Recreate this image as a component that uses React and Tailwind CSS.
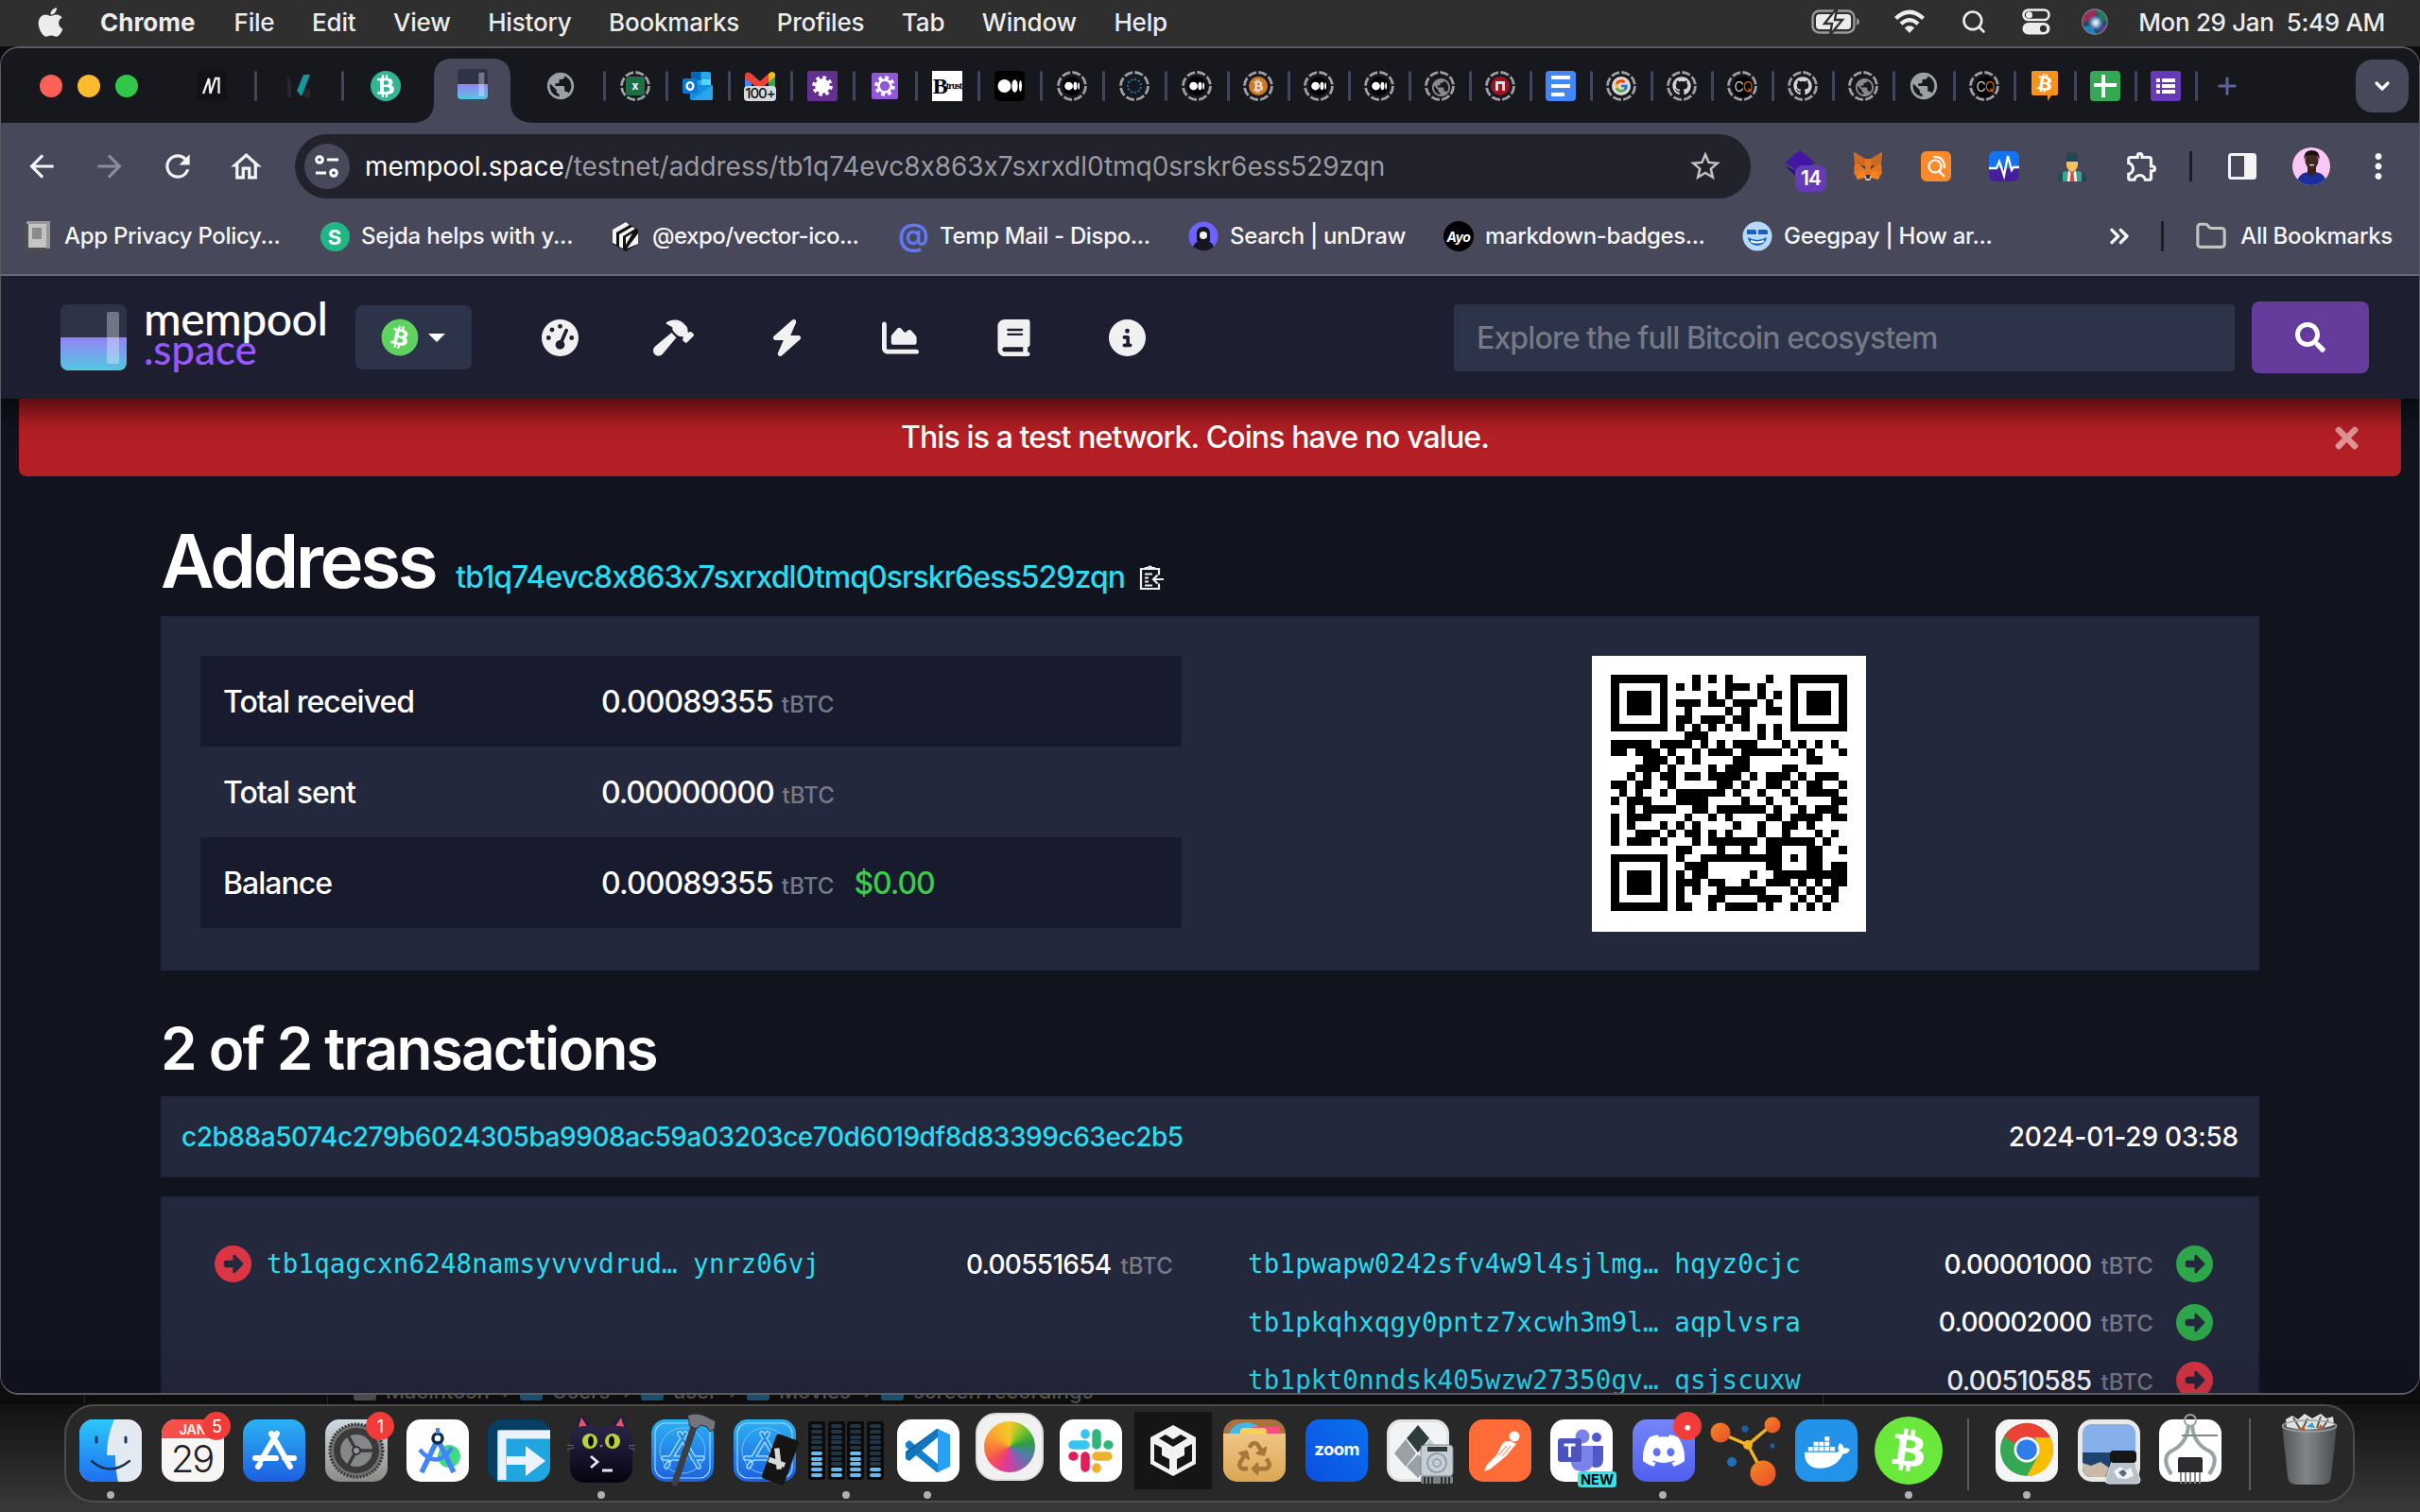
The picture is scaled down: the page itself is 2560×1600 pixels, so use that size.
import React from 'react';
import { FaApple, FaBitcoin, FaBtc, FaSearch, FaTimes, FaGithub, FaDocker, FaDiscord, FaRecycle } from 'react-icons/fa';
import { FaGaugeHigh, FaHammer, FaBolt, FaChartArea, FaBook, FaCircleInfo, FaCircleRight } from 'react-icons/fa6';
import { FcGoogle } from 'react-icons/fc';
import {
  MdPublic, MdArrowBack, MdArrowForward, MdRefresh, MdOutlineHome, MdStarBorder, MdOutlineExtension, MdMoreVert,
} from 'react-icons/md';
import { Search, Plus, ChevronDown, ChevronsRight, Folder } from 'lucide-react';

/* ---------- macOS menu bar ---------- */

const MENUS = ['File', 'Edit', 'View', 'History', 'Bookmarks', 'Profiles', 'Tab', 'Window', 'Help'];

function MenuBar() {
  return (
    <div className="flex h-[49px] shrink-0 items-center bg-[#2f2f2f] pb-[3px] text-[26px] font-medium tracking-[-0.2px] text-[#ececec]">
      <FaApple className="ml-[36px] size-[35px]" />
      <span className="ml-[35px] font-bold tracking-[0px]">Chrome</span>
      <div className="ml-[41px] flex gap-[39.6px]">
        {MENUS.map((m) => <span key={m}>{m}</span>)}
      </div>
      <div className="ml-auto flex items-center pr-[37px]">
        <svg viewBox="0 0 52 28" className="h-7 w-[52px]">
          <rect x="1.5" y="2.5" width="44" height="23" rx="7" fill="none" stroke="#9a9a9a" strokeWidth="2.4" />
          <rect x="5" y="6" width="37" height="16" rx="4" fill="#ececec" />
          <path d="M48 10v8q3-1.500 3-4t-3-4z" fill="#9a9a9a" />
          <path d="M26 1 14 16h8l-2 12 13-16h-8l2-11z" fill="#ececec" stroke="#2f2f2f" strokeWidth="2.4" />
        </svg>
        <svg viewBox="0 0 34 26" className="ml-[35px] h-[26px] w-[34px]">
          <path d="M2.500 9.500Q17-4 31.500 9.500M8 15.200Q17 7 26 15.200" fill="none" stroke="#ececec" strokeWidth="4.200" />
          <path d="M17 25 11.800 19.400Q17 15 22.200 19.400z" fill="#ececec" />
        </svg>
        <Search className="ml-[37px] size-[28px]" strokeWidth={2.3} />
        <svg viewBox="0 0 30 28" className="ml-[37px] h-7 w-[30px]">
          <rect x="1.500" y="1.500" width="27" height="10.500" rx="5.250" fill="none" stroke="#ececec" strokeWidth="2.600" />
          <circle cx="7.500" cy="6.750" r="3.500" fill="#ececec" />
          <rect x="0.500" y="15" width="29" height="12.500" rx="6.250" fill="#ececec" />
          <circle cx="22.500" cy="21.300" r="3.600" fill="#2f2f2f" />
        </svg>
        <svg viewBox="0 0 28 28" className="ml-[33px] size-7">
          <defs>
            <radialGradient id="siriCore"><stop offset="0" stopColor="#fff" /><stop offset=".35" stopColor="#c4dcff" stopOpacity=".85" /><stop offset="1" stopColor="#5a7fd0" stopOpacity="0" /></radialGradient>
            <clipPath id="siriClip"><circle cx="14" cy="14" r="13" /></clipPath>
          </defs>
          <g clipPath="url(#siriClip)">
            <rect width="28" height="28" fill="#1d4c63" />
            <path d="M0 0h18q-2 10-18 16z" fill="#9c2b56" />
            <path d="M14 0h14v14q-8 0-14-14z" fill="#1f7a5c" />
            <path d="M2 20q8-6 14 8H2z" fill="#1d7fc4" />
            <path d="M28 16q-8 0-10 12h10z" fill="#6d2f9b" />
          </g>
          <circle cx="15" cy="15" r="9" fill="url(#siriCore)" />
          <circle cx="14" cy="14" r="13.200" fill="none" stroke="#8a8189" strokeWidth="1.200" />
        </svg>
        <span className="ml-[32px] tracking-[-0.330px] whitespace-pre">Mon 29 Jan  5:49 AM</span>
      </div>
    </div>
  );
}

/* ---------- tab favicons ---------- */

function MempoolMark({ className }) {
  return (
    <svg viewBox="0 0 70 70" className={className}>
      <defs>
        <linearGradient id="poolFill" x1="0" y1="0" x2="0" y2="1">
          <stop offset="0" stopColor="#9482f5" />
          <stop offset="1" stopColor="#52c8e0" />
        </linearGradient>
        <clipPath id="poolClip"><rect width="70" height="70" rx="8" /></clipPath>
      </defs>
      <g clipPath="url(#poolClip)">
        <rect width="70" height="70" fill="#2e3348" />
        <rect y="35" width="70" height="35" fill="url(#poolFill)" />
        <rect x="49" y="8" width="13" height="55" rx="2" fill="#fff" opacity=".33" />
      </g>
    </svg>
  );
}

function Ring({ children }) {
  return (
    <div className="relative grid size-8 place-items-center">
      <svg viewBox="0 0 32 32" className="absolute inset-0">
        <circle cx="16" cy="16" r="14.500" fill="none" stroke="#9da0a5" strokeWidth="2.800" strokeDasharray="9 2.388" />
      </svg>
      <div className="grid size-5 place-items-center">{children}</div>
    </div>
  );
}

function MediumGlyph({ className }) {
  return (
    <svg viewBox="0 0 32 32" className={className}>
      <rect width="32" height="32" rx="5" fill="#000" />
      <circle cx="10.500" cy="16" r="7" fill="#fff" />
      <ellipse cx="21.500" cy="16" rx="3.200" ry="6.800" fill="#fff" />
      <ellipse cx="27.500" cy="16" rx="1.500" ry="6" fill="#fff" />
    </svg>
  );
}

const Globe = () => <MdPublic className="size-[34px] text-[#9aa0a6]" />;
const RingGlobe = () => <Ring><MdPublic className="size-[23px] text-[#85888d]" /></Ring>;
const RingMedium = () => <Ring><MediumGlyph className="size-5 rounded-full" /></Ring>;
const RingGithub = () => <Ring><FaGithub className="size-5 text-[#d4d4d4]" /></Ring>;
const RingCQ = () => (
  <Ring>
    <div className="flex size-[22px] items-center justify-center rounded-full bg-black text-[14px] leading-none tracking-[-1px] text-[#cfcfcf]">
      C<span className="text-[#c46a1c]">Q</span>
    </div>
  </Ring>
);

const Outlook = () => (
  <svg viewBox="0 0 32 32" className="size-8">
    <rect x="9" y="1" width="21" height="18" rx="2" fill="#28a8ea" />
    <rect x="9" y="1" width="10.500" height="9" fill="#0364b8" />
    <rect x="20" y="9" width="10" height="9" fill="#50d9ff" />
    <path d="M8 15h24v14a2 2 0 0 1-2 2H10a2 2 0 0 1-2-2z" fill="#1490df" />
    <path d="M32 15v14a2 2 0 0 1-2 2H10z" fill="#28a8ea" />
    <rect x="0" y="8" width="16" height="16" rx="2" fill="#0f78d4" />
    <ellipse cx="8" cy="16" rx="3.300" ry="3.900" fill="none" stroke="#fff" strokeWidth="2.400" />
  </svg>
);

const Gmail = () => (
  <div className="relative size-8">
    <svg viewBox="0 0 32 32" className="size-8">
      <path d="M0 3v21h7V11z" fill="#4285f4" />
      <path d="M32 3v21h-7V11z" fill="#34a853" />
      <path d="M32 3q-3-4-7 0v9l7-6z" fill="#fbbc04" />
      <path d="M0 5q1-6 7-2l9 8 9-8v9l-9 8L0 8z" fill="#ea4335" />
    </svg>
    <span className="absolute -left-px bottom-0 w-[34px] rounded bg-[#d8dadd] text-center text-[15px] leading-[16px] font-medium tracking-[-1px] text-[#111]">100+</span>
  </div>
);

const gear = (bg, outline) => (
  <svg viewBox="0 0 32 32" className="size-8">
    <rect x={outline ? 2 : 0} y={outline ? 2 : 0} width={outline ? 28 : 32} height={outline ? 28 : 32} rx="2" fill={bg} />
    <circle cx="16" cy="16" r="8.800" fill="none" stroke="#fff" strokeWidth="4" strokeDasharray="3.600 3.310" />
    <circle cx="16" cy="16" r="6.500" fill={outline ? 'none' : '#fff'} stroke="#fff" strokeWidth="2.600" />
  </svg>
);

const LEAD_TABS = [
  <div className="grid size-8 place-items-center bg-[#121216]">
    <svg viewBox="0 0 20 20" className="size-5"><path d="M1 18 7 2l1.500 16L14 2l3.500 0v16" fill="none" stroke="#f2f2f2" strokeWidth="2.300" /></svg>
  </div>,
  <svg viewBox="0 0 26 26" className="size-[26px]"><path d="M1 1v24h4V10l5 10zM19 16v9h6V16z" fill="#26282c" /><path d="M18 1h7L16 24l-5-6z" fill="#16969c" /></svg>,
  <div className="grid size-8 place-items-center rounded-full bg-[#33b596]"><FaBtc className="size-6 text-white" /></div>,
];

const MID_TABS = [
  <Ring><div className="grid size-5 place-items-center rounded-sm bg-[#1d7044] text-[12px] leading-none font-bold text-white">x</div></Ring>,
  <Outlook />,
  <Gmail />,
  gear('#63308f', false),
  gear('#9257d8', true),
  <div className="grid size-8 place-items-center bg-white font-['Liberation_Serif'] font-bold text-black">
    <div className="flex items-center leading-[26px] whitespace-nowrap"><span className="text-[24px] tracking-[-2px]">B</span><span className="text-[10px] tracking-[-0.8px]">trust</span></div>
  </div>,
  <MediumGlyph className="size-8" />,
  <RingMedium />,
  <Ring><div className="size-4 rounded-full border-2 border-dotted border-[#27779b]" /></Ring>,
  <RingMedium />,
];

const END_TABS = [
  <Ring><div className="grid size-5 place-items-center rounded-full bg-[#cd7a26]"><FaBtc className="size-3.5 text-[#ddd]" /></div></Ring>,
  <RingMedium />,
  <RingMedium />,
  <RingGlobe />,
  <Ring><div className="grid size-5 place-items-center rounded-full bg-[#a01220]"><div className="size-2.5 border-x-[3px] border-t-[3px] border-[#ddd]" /></div></Ring>,
  <div className="flex size-8 flex-col justify-center gap-[5px] rounded bg-[#4486f4] pl-[6px]">
    <div className="h-1 w-5 bg-white" /><div className="h-1 w-5 bg-white" /><div className="h-1 w-3.5 bg-white" />
  </div>,
  <Ring><div className="grid size-5 place-items-center rounded-full bg-[#dadada]"><FcGoogle className="size-4" /></div></Ring>,
  <RingGithub />,
  <RingCQ />,
  <RingGithub />,
  <RingGlobe />,
  <Globe />,
  <RingCQ />,
  <svg viewBox="0 0 28 32" className="h-8 w-7"><path d="M2 0h24a2 2 0 0 1 2 2v22a2 2 0 0 1-2 2h-5l-4 6v-6H2a2 2 0 0 1-2-2V2a2 2 0 0 1 2-2z" fill="#f7931a" /><g transform="translate(4 3) rotate(10 10 10)"><FaBtc size={20} color="#fff" /></g></svg>,
  <svg viewBox="0 0 32 32" className="size-8"><rect width="32" height="32" rx="4" fill="#34a853" /><path d="M12 4h4v9h12v4H16v11h-4V17H4v-4h8z" fill="#fff" /></svg>,
  <svg viewBox="0 0 32 32" className="size-8"><rect width="32" height="32" rx="3" fill="#673ab7" /><path d="M6 8h4v4H6zM12 8h14v4H12zM6 14h4v4H6zM12 14h14v4H12zM6 20h4v4H6zM12 20h14v4H12z" fill="#fff" /></svg>,
];

const Sep = () => <div className="-mx-[1.500px] h-8 w-[3px] shrink-0 rounded bg-[#43465b]" />;

function TabStrip() {
  return (
    <div className="flex h-[79px] shrink-0 items-center bg-[#17181d]">
      <div className="ml-[41px] flex w-[136px] shrink-0 gap-4">
        <div className="size-6 rounded-full bg-[#fe5f57]" />
        <div className="size-6 rounded-full bg-[#febb2e]" />
        <div className="size-6 rounded-full bg-[#32c749]" />
      </div>
      {LEAD_TABS.map((t, i) => (
        <React.Fragment key={i}>
          <div className="grid w-[92px] shrink-0 place-items-center">{t}</div>
          {i < 2 && <Sep />}
        </React.Fragment>
      ))}
      <div className="relative -ml-[17px] flex h-[68px] w-[127px] shrink-0 items-center justify-center self-end">
        <svg viewBox="0 0 127 68" className="absolute inset-0">
          <path d="M0 68q22-1 22-22V20Q22 0 42 0h41q20 0 20 20v26q0 21 24 22z" fill="#47495b" />
        </svg>
        <MempoolMark className="relative mr-[2px] mb-[14px] size-8" />
      </div>
      <div className="-ml-[17px] grid w-[92px] shrink-0 place-items-center"><Globe /></div>
      {MID_TABS.map((t, i) => (
        <React.Fragment key={i}>
          <Sep />
          <div className="grid w-[66px] shrink-0 place-items-center">{t}</div>
        </React.Fragment>
      ))}
      {END_TABS.map((t, i) => (
        <React.Fragment key={i}>
          <Sep />
          <div className="grid w-[64px] shrink-0 place-items-center">{t}</div>
        </React.Fragment>
      ))}
      <Sep />
      <Plus className="ml-[19px] size-7 text-[#5a6596]" strokeWidth={2.600} />
      <div className="mr-[11px] ml-auto grid h-14 w-[56px] shrink-0 place-items-center rounded-[18px] bg-[#47495b]">
        <ChevronDown className="size-6 text-white" strokeWidth={3.200} />
      </div>
    </div>
  );
}

/* ---------- toolbar & bookmarks ---------- */

const Fox = () => (
  <svg viewBox="0 0 32 32" className="size-8">
    <path d="M1 1 13 8h6L31 1l-1 13 1 9-4 7-7-2-2 3h-4l-2-3-7 2-4-7 1-9z" fill="#e27625" />
    <path d="M1 1 13 8l-1 9-9-4zM31 1 19 8l1 9 9-4z" fill="#cb6b22" />
    <path d="M5 22l7-1 2 7-2 0-7 2zM27 22l-7-1-2 7 2 0 7 2z" fill="#f5841f" />
    <path d="M8 15l5 1 0 3zM24 15l-5 1 0 3z" fill="#2f343b" />
    <path d="M12 26h8l-2 5h-4z" fill="#d5bfb2" /><path d="M13.500 25h5l-1 4h-3z" fill="#233447" />
  </svg>
);

function Toolbar() {
  return (
    <div className="flex h-[92px] shrink-0 items-center bg-[#47495b] text-[#f4f4f4]">
      <div className="ml-[7px] flex shrink-0">
        <div className="grid w-[72px] place-items-center"><MdArrowBack className="size-[38px]" /></div>
        <div className="grid w-[72px] place-items-center"><MdArrowForward className="size-[38px] text-[#8b8c97]" /></div>
        <div className="grid w-[72px] place-items-center"><MdRefresh className="size-[38px]" /></div>
        <div className="grid w-[72px] place-items-center"><MdOutlineHome className="size-[39px]" /></div>
      </div>
      <div className="ml-[16px] flex h-[68px] w-[1540px] shrink-0 items-center rounded-full bg-[#21222b] pr-[29px] pl-[10px]">
        <div className="grid size-12 place-items-center rounded-full bg-[#47495b]">
          <svg viewBox="0 0 26 24" className="h-6 w-[26px]" fill="none" stroke="#fff" strokeWidth="3">
            <circle cx="5" cy="5" r="3.300" /><path d="M13 5h12M1 19h11" /><circle cx="20" cy="19" r="3.300" />
          </svg>
        </div>
        <span className="ml-[16px] text-[28px] tracking-[-0.040px] text-[#9a9ba1]">
          <span className="text-white">mempool.space</span>/testnet/address/tb1q74evc8x863x7sxrxdl0tmq0srskr6ess529zqn
        </span>
        <MdStarBorder className="ml-auto size-[38px] text-[#c3c3c0]" />
      </div>
      <div className="ml-[16px] flex shrink-0 items-center">
        <div className="relative grid w-[72px] place-items-center">
          <svg viewBox="0 0 36 36" className="size-9"><path d="M18 1 34 14 18 24 2 14z" fill="#4215a5" /><path d="M2 17l16 16 8-8-8 0z" fill="#2c0e86" /></svg>
          <span className="absolute top-[17px] left-[31px] rounded-[8px] bg-[#653cb8] px-[6px] text-[21px] leading-[28px] font-semibold tracking-[-1px] text-white">14</span>
        </div>
        <div className="grid w-[72px] place-items-center"><Fox /></div>
        <div className="grid w-[72px] place-items-center">
          <svg viewBox="0 0 32 32" className="size-8"><rect width="32" height="32" rx="6" fill="#fb8a2c" /><circle cx="15" cy="16" r="6.500" fill="none" stroke="#fff" strokeWidth="2.200" /><path d="M19 21l6 6M13 6q12-1 12 12" fill="none" stroke="#fff" strokeWidth="2.200" /></svg>
        </div>
        <div className="grid w-[72px] place-items-center">
          <svg viewBox="0 0 32 32" className="size-8"><rect width="32" height="32" rx="6" fill="#1373f0" /><path d="M0 18h32v8a6 6 0 0 1-6 6H6a6 6 0 0 1-6-6z" fill="#43209a" /><path d="M0 18h8l3-7 5 15 4-21 4 15 2-3h6" fill="none" stroke="#fff" strokeWidth="2.300" /></svg>
        </div>
        <div className="grid w-[72px] place-items-center">
          <svg viewBox="0 0 32 32" className="size-8"><path d="M10 10V3q6-5 12 0v7l2 1q-8 4-16 0z" fill="#264653" /><path d="M10 11h12v5q-2 5-6 6-4-1-6-6z" fill="#f4c15d" /><path d="M0 32q0-9 9-11l7 3 7-3q9 2 9 11z" fill="#3ba58d" /><path d="M0 32q0-9 6-10v10zM32 32q0-9-6-10v10z" fill="#264653" /><path d="M12 20l4 4 4-4 1 12H11z" fill="#fff" /><path d="M14.500 22h3l1 10h-5z" fill="#e2483a" /></svg>
        </div>
        <div className="grid w-[72px] place-items-center pl-1"><MdOutlineExtension className="size-[38px]" /></div>
      </div>
      <div className="ml-[16px] h-8 w-[3px] bg-[#1c1d25]" />
      <svg viewBox="0 0 30 28" className="ml-[38px] h-7 w-[30px]"><rect x="1.500" y="1.500" width="27" height="25" rx="2" fill="none" stroke="#f4f4f4" strokeWidth="3" /><path d="M17 1h10v26H17z" fill="#f4f4f4" /></svg>
      <svg viewBox="0 0 40 40" className="ml-[38px] size-10">
        <defs><clipPath id="face"><circle cx="20" cy="20" r="20" /></clipPath></defs>
        <g clipPath="url(#face)"><rect width="40" height="40" fill="#fbc8f5" /><path d="M4 42q0-14 12-16h9q12 2 12 16z" fill="#1a2f9e" /><path d="M16 20h9v7l-4 4-5-4z" fill="#3a221b" /><ellipse cx="20.500" cy="14" rx="7" ry="9" fill="#43281f" /><path d="M12.500 13q-1-10 8-10t8 10l-2-4q-6-2-12 0z" fill="#181112" /><path d="M17.500 18q3 3 6 0z" fill="#eee" /></g>
      </svg>
      <MdMoreVert className="mr-[22px] ml-auto size-[42px]" />
    </div>
  );
}

const BOOKMARKS = [
  ['App Privacy Policy...', <svg viewBox="0 0 28 32" className="mr-[3px] h-8 w-7"><rect x="3" width="25" height="29" fill="#9a9a9a" /><rect x="0" y="3" width="24" height="29" fill="#4d4d4d" /><rect x="5" y="3" width="19" height="25" fill="#c4c4c4" /><path d="M9 7h10v12H9z" fill="#8b8b8b" /></svg>],
  ['Sejda helps with y...', <div className="grid size-[31px] place-items-center rounded-full bg-[#1fb884] text-[22px] font-bold tracking-normal text-white">S</div>],
  ['@expo/vector-ico...', <svg viewBox="0 0 32 32" className="size-8"><path d="M2 9 16 1l13 8v15l-13 8-14-8z" fill="#111" /><path d="M2 9 16 1l4 3L6 12v13l-4-2zM9 14l14-8 3 2-13 8v13l-4-2z" fill="#f4f4f4" /><path d="M17 29 29 13v11zM16 25V17l7-4z" fill="#f4f4f4" /></svg>],
  ['Temp Mail - Dispo...', <span className="mb-1 text-[33px] leading-8 font-semibold tracking-normal text-[#6577f3]">@</span>],
  ['Search | unDraw', <svg viewBox="0 0 32 32" className="size-8"><circle cx="16" cy="16" r="15.500" fill="#6c63ff" /><path d="M9 16q-1-10 7-10t7 10v5H9z" fill="#17151f" /><circle cx="16" cy="15" r="4" fill="#f2f2f2" /><path d="M5 27q3-7 11-7t11 7q-11 9-22 0z" fill="#17151f" /></svg>],
  ['markdown-badges...', <div className="grid size-8 place-items-center rounded-full bg-black text-[14px] font-bold tracking-[-0.500px] text-white italic">Ayo</div>],
  ['Geegpay | How ar...', <svg viewBox="0 0 32 32" className="size-8"><circle cx="16" cy="16" r="15.500" fill="#b9d9fb" /><path d="M5 14v-5h8a2 2 0 0 1 2 2v3zM17 14v-5h8a2 2 0 0 1 2 2v3z" fill="#1464c8" /><path d="M6 17q10 6 20 0-1 8-10 9-9-1-10-9z" fill="#1464c8" /><path d="M9 21q7 3 14 0" stroke="#fff" strokeWidth="2" fill="none" /></svg>],
];
const BOOKMARK_STYLES = [
  'w-[314px] tracking-[-0.300px]', 'w-[308px] tracking-[-0.220px]', 'w-[304px] tracking-[-0.520px]', 'w-[307px] tracking-[-0.340px]',
  'w-[270px] tracking-[-0.300px]', 'w-[316px] tracking-[-0.370px]', 'w-[300px] tracking-[-0.270px]',
];

function BookmarksBar() {
  return (
    <div className="flex h-[70px] shrink-0 items-start border-b-2 border-[#6a6b76] bg-[#47495b]">
      <div className="flex h-14 w-full items-center text-[24px] font-medium text-[#f6f6f6]">
        <div className="w-[23px] shrink-0" />
        {BOOKMARKS.map(([name, icon], i) => (
          <div key={name} className={`flex shrink-0 items-center whitespace-nowrap ${BOOKMARK_STYLES[i]}`}>
            <div className="mr-3 grid w-8 shrink-0 place-items-center">{icon}</div>
            {name}
          </div>
        ))}
        <ChevronsRight className="ml-[83px] size-[32px] shrink-0" strokeWidth={2.500} />
        <div className="ml-[28px] h-8 w-[3px] shrink-0 bg-[#1c1d25]" />
        <Folder className="mr-[14px] ml-auto size-[34px] shrink-0 text-[#c3c3c0]" strokeWidth={2.200} />
        <span className="mr-[28px] tracking-[-0.300px] whitespace-nowrap">All Bookmarks</span>
      </div>
    </div>
  );
}

/* ---------- mempool page ---------- */

const NAV = [FaGaugeHigh, FaHammer, FaBolt, FaChartArea, FaBook, FaCircleInfo];

function SiteHeader() {
  return (
    <header className="relative z-10 flex h-[130px] shrink-0 items-center bg-[#1d1f31] shadow-[0_6px_24px_8px_rgba(0,0,0,0.550)]">
      <MempoolMark className="ml-[63px] size-[70px] shrink-0" />
      <div className="ml-[18px] w-[224px] shrink-0 pb-[8px] font-['Lato'] leading-[32px]">
        <div className="text-[48px] tracking-[-0.500px] text-white">mempool</div>
        <div className="text-[44px] tracking-[-0.100px] text-[#9857ff]">.space</div>
      </div>
      <div className="flex h-[68px] w-[123px] shrink-0 items-center gap-[10px] rounded-lg bg-[#2d3348] pl-[27px]">
        <div className="grid size-[40px] place-items-center rounded-full bg-[radial-gradient(circle,#fff_55%,transparent_56%)]"><FaBitcoin className="size-[40px] text-[#5fd35f]" /></div>
        <div className="size-0 border-x-[9px] border-t-[9px] border-x-transparent border-t-white" />
      </div>
      <nav className="ml-[33px] flex shrink-0">
        {NAV.map((Icon, i) => (
          <div key={i} className="grid w-[120px] place-items-center"><Icon className={i === 1 ? 'size-[43px] text-[#f1f1f1]' : 'size-[39px] text-[#f1f1f1]'} /></div>
        ))}
      </nav>
      <div className="ml-auto flex h-[71px] w-[826px] shrink-0 items-center rounded bg-[#2d3348] pt-[2px] pl-6 text-[32px] tracking-[-0.880px] text-[#747a85]">
        Explore the full Bitcoin ecosystem
      </div>
      <div className="mr-[53px] ml-[18px] grid h-[76px] w-[124px] shrink-0 place-items-center rounded-lg bg-[#653b9c]"><FaSearch className="size-[32px] text-white" /></div>
    </header>
  );
}

const Unit = () => <span className="text-[24px] tracking-[0.100px] text-[#777a86]">tBTC</span>;

const QR_ROWS = [
  '0-6,10,12,14,19,22-28', '0,6,8,10,14-16,18,22,28', '0,2-4,6,12,14,18,20,22,24-26,28',
  '0,2-4,6,8-10,12-13,15-17,19,22,24-26,28', '0,2-4,6,9,14,16,19-20,22,24-26,28', '0,6,8-9,11-13,15-16,22,28',
  '0-6,8,10,12,14,16,18,20,22-28', '9-11,18,20', '0-4,6-9,11,13,15-17,21,23,25,27', '0-1,3-5,7,10,12-14,16-20,22,24,28',
  '4-6,8,10,15-16,24-25', '3-5,7,12,14-16,21-22', '2,4,6-7,9-10,12-15,17,19-21,23,25-27', '0-1,3-4,7,13-14,16,19-20,22,24-25,28',
  '1,3,6,8-13,15,18,21,24-27', '0,2-4,8-11,16,19,22,27-28', '2,4-7,10-11,13-18,20,23,25-27', '0,2-4,9,12,14,19-20,22-25,27-28',
  '0,2,6,8,10,15,18,21-22,24', '0,3-5,7,9-10,12,14,18,21,25,27', '0,2-4,6,10,12-17,19-24,26', '8-9,13,16,19-20,24-25,28',
  '0-6,8,11-20,22,24-25', '0,6,9-11,19-20,24-25,27-28', '0,2-4,6,8,10-11,17,20-28', '0,2-4,6,8-10,12-13,16,19-21,23,25,27-28',
  '0,2-4,6,8,10,13-18,22,24,26-27', '0,6,8,12-13,18-20,23,25,27', '0-6,8-9,12,14-17,19,22,24,26',
];
const QR_PATH = QR_ROWS.map((row, y) => row.split(',').map((run) => {
  const [a, b = a] = run.split('-').map(Number);
  return `M${a} ${y}h${b - a + 1}v1h-${b - a + 1}z`;
}).join('')).join('');

const BALANCE = [['Total received', '0.00089355'], ['Total sent', '0.00000000'], ['Balance', '0.00089355', '$0.00']];

function AddressCard() {
  return (
    <section className="flex h-[375px] border-2 border-[#202539] bg-[#24283c] pt-10 pl-10">
      <div className="w-[1038px] shrink-0 text-[32px]">
        {BALANCE.map(([label, amount, fiat], i) => (
          <div key={label} className={`flex h-24 items-center pt-[2px] pl-6 text-white ${i === 1 ? '' : 'bg-[#181b2d]'}`}>
            <div className="w-[400px] tracking-[-0.980px]">{label}</div>
            <div className="flex items-baseline gap-[9px]">
              <span className={i === 1 ? 'tracking-[-1.150px]' : 'tracking-[-0.870px]'}>{amount}</span><Unit />
              {fiat && <span className="ml-[12px] tracking-[-1.100px] text-[#3bcc49]">{fiat}</span>}
            </div>
          </div>
        ))}
      </div>
      <div className="ml-[434px] h-[292px] w-[290px] bg-white p-5">
        <svg viewBox="0 0 29 29" className="size-[250px]" shapeRendering="crispEdges"><path d={QR_PATH} fill="#000" /></svg>
      </div>
    </section>
  );
}

const OUTPUTS = [
  ['tb1pwapw0242sfv4w9l4sjlmg… hqyz0cjc', '0.00001000', false],
  ['tb1pkqhxqgy0pntz7xcwh3m9l… aqplvsra', '0.00002000', false],
  ['tb1pkt0nndsk405wzw27350gv… qsjscuxw', '0.00510585', true],
];
const Amount = ({ value }) => (
  <span className="ml-auto flex items-baseline gap-[10px] text-[28px] text-white"><span className="tracking-[-0.720px]">{value}</span><Unit /></span>
);
const Mono = ({ children }) => (
  <span className="font-['DejaVu_Sans_Mono'] text-[27.500px] tracking-[0.160px] whitespace-pre text-[#2bdcf0]">{children}</span>
);

function Page() {
  return (
    <div className="flex min-h-0 flex-1 flex-col overflow-hidden bg-[#11131f] font-[450]">
      <SiteHeader />
      <div className="mx-[19px] flex h-[82px] shrink-0 items-center rounded-b-lg bg-[#b31f24] text-[32px] tracking-[-0.890px] text-white">
        <span className="ml-[933px]">This is a test network. Coins have no value.</span>
        <FaTimes className="mr-[40px] ml-auto size-[35px] text-[#dc9497]" />
      </div>
      <main className="mx-[169px] shrink-0">
        <div className="flex h-[148px] items-baseline pt-[45px]">
          <h1 className="text-[78px] leading-[90px] font-[560] tracking-[-3.400px] text-white">Address</h1>
          <span className="ml-[22px] text-[32px] tracking-[-0.960px] text-[#2bdcf0]">tb1q74evc8x863x7sxrxdl0tmq0srskr6ess529zqn</span>
          <svg viewBox="0 0 26 28" className="ml-[15px] h-7 w-[26px] translate-y-[3px]" fill="none" stroke="#eee" strokeWidth="2.200">
            <path d="M21 11.500V5H2v21h19v-5.500M7 5.500V4h2.500a2.200 2.200 0 0 1 4 0H16v1.500M6 10.500h8M6 14.500h4M6 18.500h4M6 22.500h8M26 16H14.500m5-4.500L15 16l4.500 4.500" />
          </svg>
        </div>
        <AddressCard />
        <h2 className="h-[133px] pt-[45px] text-[62px] leading-[76px] font-[560] tracking-[-1.800px] text-white">2 of 2 transactions</h2>
        <div className="flex h-[86px] items-center justify-between border-2 border-[#202539] bg-[#24283c] pr-[20px] pl-[20px] text-[28px]">
          <span className="tracking-[-0.450px] text-[#2bdcf0]">c2b88a5074c279b6024305ba9908ac59a03203ce70d6019df8d83399c63ec2b5</span>
          <span className="tracking-[-0.220px] text-white">2024-01-29 03:58</span>
        </div>
        <div className="mt-5 flex h-[260px] gap-[79px] border-2 border-[#202539] bg-[#24283c] pt-[39px] pr-[47px] pl-[55px]">
          <div className="w-[1014px] shrink-0">
            <div className="flex h-[61.500px] items-center">
              <FaCircleRight className="mr-[16px] size-[39px] text-[#dc3546]" />
              <Mono>tb1qagcxn6248namsyvvvdrud… ynrz06vj</Mono>
              <Amount value="0.00551654" />
            </div>
          </div>
          <div className="flex-1">
            {OUTPUTS.map(([addr, value, spent]) => (
              <div key={addr} className="flex h-[61.500px] items-center">
                <Mono>{addr}</Mono>
                <Amount value={value} />
                <FaCircleRight className={`ml-[24px] size-[39px] ${spent ? 'text-[#dc3546]' : 'text-[#2ea64a]'}`} />
              </div>
            ))}
          </div>
        </div>
      </main>
    </div>
  );
}

/* ---------- dock ---------- */

const Tile = ({ fill, children }) => (
  <svg viewBox="0 0 66 66" className="size-[66px] shrink-0 overflow-visible">
    {fill && <rect width="66" height="66" rx="15" fill={fill} />}
    {children}
  </svg>
);

const Defs = () => (
  <svg className="absolute size-0">
    <defs>
      <linearGradient id="blueTile" x1="0" y1="0" x2="0" y2="1"><stop offset="0" stopColor="#2bb2f3" /><stop offset="1" stopColor="#1d5fe0" /></linearGradient>
      <linearGradient id="finderL" x1="0" y1="0" x2="0" y2="1"><stop offset="0" stopColor="#2bc7fb" /><stop offset="1" stopColor="#1e6ff0" /></linearGradient>
      <linearGradient id="silver" x1="0" y1="0" x2="0" y2="1"><stop offset="0" stopColor="#cfdbe2" /><stop offset="1" stopColor="#8d8a86" /></linearGradient>
      <linearGradient id="catBody" x1="0" y1="0" x2="0" y2="1"><stop offset="0" stopColor="#2a2548" /><stop offset="1" stopColor="#05040f" /></linearGradient>
      <linearGradient id="kraft" x1="0" y1="0" x2="0" y2="1"><stop offset="0" stopColor="#efc583" /><stop offset="1" stopColor="#dba756" /></linearGradient>
      <linearGradient id="zoomBg" x1="1" y1="0" x2="0" y2="1"><stop offset="0" stopColor="#0a72ee" /><stop offset="1" stopColor="#0b4fe0" /></linearGradient>
      <linearGradient id="discordBg" x1="0" y1="0" x2="0" y2="1"><stop offset="0" stopColor="#7585f7" /><stop offset="1" stopColor="#4f5ff0" /></linearGradient>
      <linearGradient id="nodeFill" x1="0" y1="0" x2="1" y2="1"><stop offset="0" stopColor="#f28a22" /><stop offset="1" stopColor="#ea4a2c" /></linearGradient>
      <linearGradient id="binFill" x1="0" y1="0" x2="1" y2="0"><stop offset="0" stopColor="#565a5c" /><stop offset=".45" stopColor="#8c9193" /><stop offset="1" stopColor="#4b4f51" /></linearGradient>
      <clipPath id="tileClip"><rect width="66" height="66" rx="15" /></clipPath>
    </defs>
  </svg>
);

const AFrame = ({ stroke = '#fff', width = 6 }) => (
  <g stroke={stroke} strokeWidth={width} strokeLinecap="round" fill="none">
    <path d="M36 15 20 42M30 15l20 35M13 41h22M44 41h10M18 47l-2 3" />
  </g>
);
const XcodeBase = () => (
  <>
    <rect x="4" y="4" width="58" height="58" rx="11" fill="none" stroke="#9fd6fb" strokeWidth="1.200" />
    <circle cx="33" cy="33" r="24" fill="none" stroke="#7cc3f7" strokeWidth="1" />
    <AFrame stroke="#b5e0fd" width={5.500} />
    <AFrame stroke="#2290ee" width={3} />
  </>
);

const METER_LEVELS = [5, 2, 5, 2];
const PINWHEEL = 'size-[54px] rounded-full bg-[conic-gradient(#f3c928,#7cc42a_40deg,#2f9e3f_75deg,#4d7fa8_115deg,#8f5bb0_150deg,#e0399a_190deg,#f4485f_225deg,#f8793a_265deg,#f9b02c_315deg,#f3c928)]';

const DOCK = [
  { dot: true, icon: <Tile fill="#e4eaf2"><g clipPath="url(#tileClip)"><path d="M0 0h37q-8 18-8 38h9q0 16 3 28H0z" fill="url(#finderL)" /></g><path d="M18 19v5M49 19v5" stroke="#16385f" strokeWidth="3" strokeLinecap="round" /><path d="M13 44q19 17 40 0" fill="none" stroke="#17324f" strokeWidth="2.400" strokeLinecap="round" /></Tile> },
  { badge: '5', icon: <Tile fill="#f7f6f4"><path d="M0 20v-5A15 15 0 0 1 15 0h36a15 15 0 0 1 15 15v5z" fill="#f5504a" /><text x="33" y="16" fontSize="14" fontWeight="600" fill="#fff" textAnchor="middle">JAN</text><text x="32" y="56" fontSize="40" fontWeight="300" letterSpacing="-2" fill="#222" textAnchor="middle">29</text></Tile> },
  { icon: <Tile fill="url(#blueTile)"><AFrame /></Tile> },
  { badge: '1', icon: <Tile fill="url(#silver)"><circle cx="33" cy="33" r="28" fill="#6f7274" stroke="#333" strokeWidth="3" strokeDasharray="2 1.500" /><circle cx="33" cy="33" r="20.500" fill="#85888a" stroke="#3a3a3a" strokeWidth="7" /><path d="M33 33 23 15M33 33h21M33 33 23 51" stroke="#3a3a3a" strokeWidth="3.500" /><circle cx="33" cy="33" r="4" fill="#999" stroke="#333" strokeWidth="2" /></Tile> },
  { icon: <Tile fill="#fff"><circle cx="45" cy="39" r="12" fill="#3ddc84" /><path d="M33 21 16 56M33 21l17 35" stroke="#4285f4" strokeWidth="5.500" /><path d="M14 32q18 22 34-2" fill="none" stroke="#4285f4" strokeWidth="4.500" /><circle cx="33" cy="20" r="5" fill="#fff" stroke="#073042" strokeWidth="3.500" /><path d="M33 15v-6" stroke="#4285f4" strokeWidth="4" /></Tile> },
  { icon: <Tile fill="#073e63"><path d="M10 16a5 5 0 0 1 5-5h51v40a15 15 0 0 1-15 15H10z" fill="#1fa5e0" /><path d="M15 64V16h51" fill="none" stroke="#eaf3ff" strokeWidth="9" /><path d="M20 39h20V28l21 16-21 16V48H20z" fill="#eaf3ff" /></Tile> },
  { dot: true, icon: <Tile><path d="M5 20 9-4Q15-6 23 9h20Q51-6 57-4l4 24z" fill="#241d40" /><path d="M9 8 12-2l7 11zM57 8 54-2l-7 11z" fill="#e4566b" /><rect y="7" width="66" height="60" rx="15" fill="url(#catBody)" /><circle cx="21" cy="23" r="8" fill="#b6d43a" /><circle cx="45" cy="23" r="8" fill="#b6d43a" /><ellipse cx="22" cy="23" rx="3" ry="5.500" fill="#0d0b18" /><ellipse cx="44" cy="23" rx="3" ry="5.500" fill="#0d0b18" /><path d="M31 27h4l-2 3z" fill="#e4566b" /><path d="M22 39l7 6-7 6M34 54h11" fill="none" stroke="#e8e4f5" strokeWidth="2.800" /><path d="M-3 27l7 1M-3 32l7-2M69 27l-7 1M69 32l-7-2" stroke="#6d6781" /></Tile> },
  { icon: <Tile fill="url(#blueTile)"><XcodeBase /><path d="M45 8 25 67" stroke="#3b3f47" strokeWidth="7" strokeLinecap="round" /><path d="M38-4q10-5 22 2l8 4-1 8-5 3-3-5-6-2-6 4-7-4q1-4-2-10z" fill="#73767b" stroke="#2b2d31" strokeWidth="1" /></Tile> },
  { icon: <Tile fill="url(#blueTile)"><XcodeBase /><g transform="rotate(20 48 42)"><rect x="37" y="17" width="25" height="50" rx="3" fill="#141414" /><path d="M38 46h18M42 32l10 20" stroke="#d9d9d9" strokeWidth="5.500" /></g></Tile> },
  { dot: true, icon: (
    <div className="mt-[2px] flex h-[62px] w-[80px] justify-between">
      {METER_LEVELS.map((lvl, i) => (
        <div key={i} className="flex w-[18px] flex-col justify-between rounded-[3px] bg-[#0b0b0b] p-[3px]">
          {Array.from({ length: 10 }, (_, k) => <div key={k} className={`h-1 rounded-sm ${10 - k <= lvl ? 'bg-[#69b9ee]' : 'bg-[#213644]'}`} />)}
        </div>
      ))}
    </div>
  ) },
  { dot: true, icon: <Tile fill="#fff"><path d="M9 25l4-3 31 26v8h-2L9 29z" fill="#1383cf" /><path d="M44 10 10 40l-1-2v-4L42 10z" fill="#0f66a8" /><path d="M9 42l4 2 31-26v-8h-2L9 38z" fill="#1276bf" /><path d="M43 10l13 6v34l-13 6z" fill="#29a0f0" /></Tile> },
  { icon: <div className="-mt-[7px] grid h-[72px] w-[72px] shrink-0 place-items-center rounded-[22px] border-2 border-[#dcdcdc] bg-[#f1f1f1]"><div className={PINWHEEL} /></div> },
  { icon: <Tile fill="#fff"><g strokeLinecap="round" strokeWidth="9.500"><path d="M27 15v1M14 27h13" stroke="#36c5f0" /><path d="M39 15v12M51 27h1" stroke="#2eb67d" /><path d="M27 39v12M14 39h1" stroke="#e01e5a" /><path d="M39 39h12M39 51v1" stroke="#ecb22e" /></g></Tile> },
  { icon: <Tile><rect x="-8" y="-8" width="82" height="82" fill="#151515" /><path d="M33 6 57 19v28L33 60 9 47V19z" fill="#f2f2f2" /><path d="M18 20l7-4 8 5 8-5 7 4-15 9zM13 26l8 4v8l8 4v11l-16-9zM53 26l-8 4v8l-8 4v11l16-9z" fill="#151515" /></Tile> },
  { icon: <Tile fill="#a8733f"><path d="M6 16q3-12 20-13l10 3v14H6z" fill="#45b6e8" /><path d="M30 8l29 0 2 12H30z" fill="#f84d7d" /><rect x="18" y="9" width="28" height="20" rx="4" fill="#fcd25c" /><path d="M0 15h66v36a15 15 0 0 1-15 15H15A15 15 0 0 1 0 51z" fill="url(#kraft)" /><g transform="translate(15 23)"><FaRecycle size={36} color="#a8753a" /></g></Tile> },
  { icon: <Tile fill="url(#zoomBg)"><text x="33" y="38" fontSize="18.500" fontWeight="700" letterSpacing="-0.600" fill="#fff" textAnchor="middle">zoom</text></Tile> },
  { icon: <Tile fill="#dfe3e6"><rect x="3" y="3" width="60" height="60" rx="12" fill="#f1f3f5" /><path d="M33 6 45 20 33 35 21 20z" fill="#2f3c3f" /><path d="M20 21 31 36 20 50 8 36zM33 37l12 13-12 12-12-12z" fill="#9aa0a3" /><path d="M46 21l11 14-11 14-11-14z" fill="#c1c6c9" /><rect x="36" y="27" width="34" height="33" rx="4" fill="#c3ced6" stroke="#7d868c" strokeWidth="1" /><circle cx="53" cy="46" r="10" fill="none" stroke="#8d979e" strokeWidth="1.600" /><circle cx="53" cy="46" r="4" fill="none" stroke="#8d979e" strokeWidth="1.400" /><rect x="36" y="60" width="34" height="8" rx="2" fill="#7c8488" /><path d="M40 61v7M44 61v7M48 61v7M58 61v7M62 61v7M66 61v7" stroke="#2b2e30" strokeWidth="2" /><rect x="43" y="29" width="21" height="5" fill="#33383b" /></Tile> },
  { icon: <Tile fill="#ff6c37"><circle cx="48" cy="18" r="5.500" fill="#fff" /><path d="M44 23l6 3-11 13-17 14-6 2 3-7 10-10 5-10q3-6 10-5z" fill="#fff" /><path d="M31 38l9-10M35 39l9-11" stroke="#ff6c37" strokeWidth="1" /></Tile> },
  { icon: <Tile fill="#fff"><circle cx="34" cy="18" r="7.500" fill="#7b83eb" /><circle cx="49" cy="19" r="5" fill="#5059c9" /><path d="M42 28h14v14q0 9-8 9-6 0-6-8z" fill="#5059c9" /><path d="M22 28h23v16q0 11-11 11-12 0-12-11z" fill="#7b83eb" /><rect x="8" y="20" width="25" height="25" rx="3" fill="#4b53bc" /><path d="M14.500 27h12M20.500 27v13" stroke="#fff" strokeWidth="3" /><rect x="29" y="55" width="41" height="17" rx="4" fill="#2fe6ea" /><text x="49.500" y="69" fontSize="14.500" fontWeight="700" fill="#000" textAnchor="middle">NEW</text></Tile> },
  { dot: true, badge: '•', icon: <Tile fill="url(#discordBg)"><g transform="translate(9 9)"><FaDiscord size={48} color="#fff" /></g></Tile> },
  { icon: <Tile><path d="M8 15 36 27 62 5M36 27l16 30" fill="none" stroke="#f5b324" strokeWidth="3.500" /><circle cx="7" cy="14" r="10.500" fill="url(#nodeFill)" /><circle cx="62" cy="6" r="8.500" fill="url(#nodeFill)" /><circle cx="52" cy="57" r="13.500" fill="url(#nodeFill)" /><circle cx="36" cy="27" r="5" fill="#f5b324" /><circle cx="33" cy="10" r="3.500" fill="#1f5fa6" /><circle cx="62" cy="28" r="2.500" fill="#1f5fa6" /><circle cx="19" cy="45" r="5" fill="#1f6fb4" /></Tile> },
  { icon: <Tile fill="#2392e9"><g transform="translate(10 11)"><FaDocker size={48} color="#fff" /></g></Tile> },
  { dot: true, icon: <Tile><circle cx="33" cy="33" r="36" fill="#6be83c" /><g transform="translate(11 10) rotate(8 22 22)"><FaBtc size={45} color="#fff" /></g></Tile> },
];

const DOCK_END = [
  { dot: true, icon: <Tile fill="#f5f5f5"><circle cx="33" cy="32" r="28" fill="#34a853" /><path d="M9 18A28 28 0 0 1 58 19H33a13 13 0 0 0-12 7z" fill="#ea4335" /><path d="M58 19A28 28 0 0 1 33 60l12-21q4-10-4-20z" fill="#fbbc04" /><circle cx="33" cy="32" r="13.500" fill="#fff" /><circle cx="33" cy="32" r="10.800" fill="#2f7de8" /></Tile> },
  { icon: <Tile fill="#e9e9e9"><rect x="5" y="5" width="56" height="56" rx="9" fill="#86b0ea" /><path d="M5 35h56v17a9 9 0 0 1-9 9H14a9 9 0 0 1-9-9z" fill="#1d4470" /><path d="M5 46l9 3 10-4 9 6-4 10H14a9 9 0 0 1-9-9z" fill="#cbb9a8" /><path d="M36 45h24l6 19q0 4-4 4H33q-4 0-4-4z" fill="#b9c1c9" stroke="#e3e7ea" strokeWidth="1" /><rect x="34" y="33" width="28" height="13" rx="4" fill="#161616" /><path d="M38 55l7-5 6 4 5-3 3 9-8 3-9-1z" fill="#f0f2f4" /><path d="M43 56l5-3 4 4-4 4z" fill="#56697d" /></Tile> },
  { icon: <Tile fill="#fff"><circle cx="33" cy="1" r="6" fill="none" stroke="#9ba5a8" strokeWidth="2" /><path d="M31 6Q30 26 12 34q-10 8 1 24M35 6q1 20 19 28 10 8-1 24" fill="none" stroke="#98a3a7" strokeWidth="4" /><path d="M24 17h38" stroke="#7f898c" strokeWidth="2" /><path d="M20 56V42q0-2 2-2h22q2 0 2 2v14z" fill="#2b2e30" /><path d="M23 56v12M28 56v12M33 56v12M38 56v12M43 56v12" stroke="#888" strokeWidth="2" /></Tile> },
];

const TRASH = { icon: <Tile><path d="M4 5h58l-6 56q-1 8-10 8H20q-9 0-10-8z" fill="url(#binFill)" opacity=".9" /><path d="M9 8l-1-8 7-4 6 4 7-6 8 5 9-5 6 5 7-2 1 9q-26 8-50 2z" fill="#e2e2de" /><path d="M16-2l7 12M31-1l-5 11M45-3l-4 12M53 0l-6 9" stroke="#5a5a5a" strokeWidth="2" /><path d="M30 8l6-5 3 6z" fill="#3aa0c8" /><path d="M22 11l5-5 2 6zM41 11l4-6 3 5z" fill="#c65a2c" /><ellipse cx="33" cy="7" rx="28.500" ry="6" fill="none" stroke="#9da2a4" strokeWidth="1.500" /></Tile> };

const Cell = ({ icon, dot, badge }) => (
  <div className="relative flex h-full w-[86.450px] shrink-0 flex-col items-center pt-[14px]">
    {icon}
    {badge && <div className="absolute top-[6px] left-[54px] grid size-[30px] place-items-center rounded-full bg-[#f23c3a] text-[18px] text-white">{badge}</div>}
    {dot && <div className="absolute bottom-[2px] left-[39px] size-2 rounded-full bg-[#b0b0b0]" />}
  </div>
);

const PATH_BAR = [
  ['Macintosh', 'w-[176px]', 'bg-[#4a4a4a]'], ['Users', 'w-[128px]', 'bg-[#1b4f6b]'], ['user', 'w-[112px]', 'bg-[#1b4f6b]'],
  ['Movies', 'w-[142px]', 'bg-[#1b4f6b]'], ['screen recordings', 'w-[260px]', 'bg-[#1b4f6b]'],
];

function Dock() {
  return (
    <div className="flex min-h-0 flex-1 flex-col">
      <Defs />
      <div className="flex h-[10px] w-full shrink-0 items-end overflow-hidden bg-[#0d0d0d]">
        <div className="ml-[89px] flex h-[36px] w-[1840px] shrink-0 border-x border-[#2a2a2a]">
          <div className="mr-[27px] h-full w-[257px] shrink-0 border-r border-[#242424]" />
          {PATH_BAR.map(([name, w, bg], i) => (
            <div key={name} className={`flex h-[36px] shrink-0 items-center pt-[8px] text-[22px] leading-7 font-medium text-[#505050] ${w}`}>
              <div className={`h-5 w-6 shrink-0 rounded-[3px] ${bg}`} />
              <span className="ml-[10px] whitespace-nowrap">{name}</span>
              {i < 4 && <span className="ml-auto pr-[10px]">›</span>}
            </div>
          ))}
        </div>
      </div>
      <div className="ml-[68px] flex h-[104px] w-[2423px] shrink-0 rounded-[32px] border-2 border-[#4c4c4c] bg-[#282828] pl-[4px]">
        {DOCK.map((d, i) => <Cell key={i} {...d} />)}
        <div className="mt-[13px] mr-[18px] ml-[19px] h-[76px] w-[2px] bg-[#5c5c5c]" />
        {DOCK_END.map((d, i) => <Cell key={i} {...d} />)}
        <div className="mt-[13px] mr-[18px] ml-[19px] h-[76px] w-[2px] bg-[#5c5c5c]" />
        <Cell {...TRASH} />
      </div>
    </div>
  );
}

export default function App() {
  return (
    <div className="flex h-[1600px] w-[2560px] flex-col overflow-hidden bg-linear-to-b from-[#0d0d0d] from-92% to-[#3a3a3a] font-['Inter',sans-serif] [font-feature-settings:'calt'_0]">
      <MenuBar />
      <div className="relative flex h-[1427px] shrink-0 flex-col overflow-hidden rounded-[20px] border-x border-y-2 border-[#5a5b63] bg-[#17181d]">
        <TabStrip />
        <Toolbar />
        <BookmarksBar />
        <Page />
        <div className="pointer-events-none absolute inset-x-0 bottom-0 h-20 bg-linear-to-b from-transparent to-black/10" />
      </div>
      <Dock />
    </div>
  );
}
